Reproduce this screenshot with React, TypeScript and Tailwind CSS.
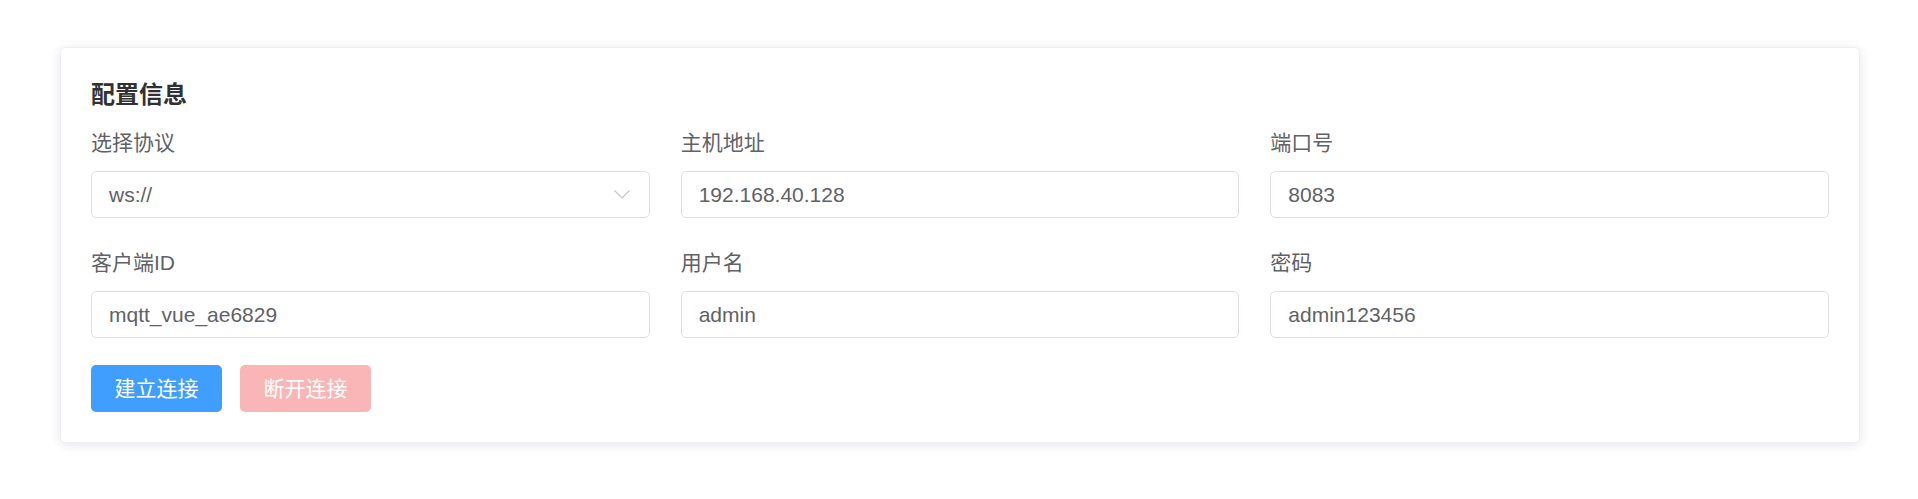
import React from 'react';

type Field = {
  readonly label: string;
  readonly value: string;
  readonly select?: boolean;
};

const fields: readonly Field[] = [
  { label: '选择协议', value: 'ws://', select: true },
  { label: '主机地址', value: '192.168.40.128' },
  { label: '端口号', value: '8083' },
  { label: '客户端ID', value: 'mqtt_vue_ae6829' },
  { label: '用户名', value: 'admin' },
  { label: '密码', value: 'admin123456' },
];

function Chevron(): JSX.Element {
  return (
    <svg width="16" height="9" viewBox="0 0 16 9" fill="none" className="shrink-0">
      <path d="M0.5 0.5 L8 8 L15.5 0.5" stroke="#c0c4cc" strokeWidth="1.1" />
    </svg>
  );
}

function FormField({ label, value, select }: Field): JSX.Element {
  return (
    <div className="flex flex-col">
      <div className="text-[21px] leading-[30px] text-[#606266]">{label}</div>
      <div className="mt-[13px] flex h-[47px] items-center justify-between rounded-[5px] border border-[#dcdfe6] bg-white pl-[17px] pr-[19px]">
        <span className="text-[21px] text-[#606266]">{value}</span>
        {select ? <Chevron /> : null}
      </div>
    </div>
  );
}

export default function App(): JSX.Element {
  return (
    <div
      className="min-h-screen bg-white pl-[60px] pr-[58px] pt-[47px]"
      style={{ fontFamily: '"Liberation Sans", "Noto Sans CJK SC", sans-serif' }}
    >
      <div className="rounded-[5px] border border-[#ebeef5] bg-white p-[30px] shadow-[0_2px_12px_0_rgba(0,0,0,0.1)]">
        <h2 className="text-[24px] font-bold leading-[34px] text-[#303133]">配置信息</h2>
        <div className="mt-[16px] grid grid-cols-3 gap-x-[31px] gap-y-[30px]">
          {fields.map((f) => (
            <FormField key={f.label} {...f} />
          ))}
        </div>
        <div className="mt-[27px] flex gap-[18px]">
          <button className="h-[47px] w-[131px] rounded-[5px] bg-[#409eff] text-[21px] text-white">
            建立连接
          </button>
          <button className="h-[47px] w-[131px] rounded-[5px] bg-[#fab6b6] text-[21px] text-white" disabled>
            断开连接
          </button>
        </div>
      </div>
    </div>
  );
}
